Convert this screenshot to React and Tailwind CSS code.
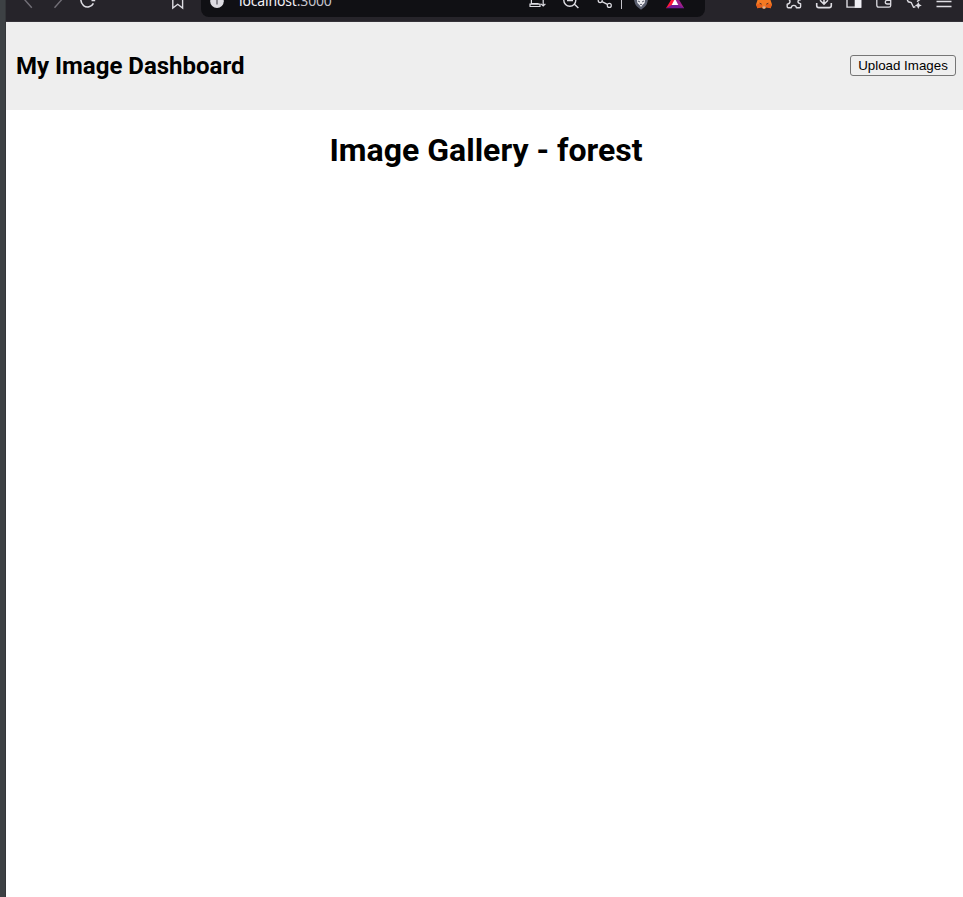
function Glyph({ x, w, className = "", children }) {
  return (
    <svg
      className={`block h-[12px] shrink-0 ${className}`}
      style={{ width: w }}
      viewBox={`${x} 0 ${w} 12`}
      fill="none"
      stroke="#dedde3"
      strokeWidth="1.4"
    >
      {children}
    </svg>
  );
}

function AddressBar() {
  return (
    <div className="ml-[17px] flex h-[17px] w-[504px] items-start overflow-hidden rounded-b-lg bg-[#101014]">
      <Glyph x={210} w={14} className="ml-[9px]">
        <circle cx="217" cy="1.2" r="6.8" fill="#dedde3" stroke="none" />
        <path d="M217 0V4.5" stroke="#77757d" strokeWidth="1.6" />
      </Glyph>
      <div className="-mt-[9px] ml-[15px] w-[100px] whitespace-nowrap font-['Noto_Sans',sans-serif] text-[14px] leading-[20px] tracking-[-0.16px] text-[#f0eff5]">
        localhost<span className="text-[#c4c3cb]">:3000</span>
      </div>
      <Glyph x={529} w={18} className="ml-[190px]">
        <path d="M531.4 0V3.5H538.6M529.5 6.5H540V4.2H530V6.5M543.2 0V6M541 3.8L543.2 6L545.4 3.8" strokeWidth="1.2" />
      </Glyph>
      <Glyph x={562} w={18} className="ml-[15px]">
        <circle cx="569.8" cy="0.3" r="6" strokeWidth="1.4" />
        <path d="M567 .5H573M574.2 4L578.4 8" strokeWidth="1.4" />
      </Glyph>
      <Glyph x={597} w={16} className="ml-[17px]">
        <circle cx="600.2" cy="0.6" r="2" strokeWidth="1.2" />
        <circle cx="609.3" cy="5.4" r="2" strokeWidth="1.2" />
        <path d="M602 1.6L607.4 4.4" strokeWidth="1.2" />
      </Glyph>
      <div className="ml-[8px] h-[9px] w-px bg-[#c3c2c9]" />
      <Glyph x={633} w={16} className="ml-[11px]">
        <path d="M634 0H648L647 3.5Q646 6.5 641 9.7Q636 6.5 635 3.5Z" fill="#5a5f70" stroke="none" />
        <path d="M637 0H645L644.6 3L642.7 4.8L641 7L639.3 4.8L637.4 3Z" fill="#eeeef2" stroke="none" />
        <path d="M638 1L640 2M644 1L642 2M640 4.4H642" stroke="#5a5f70" strokeWidth="1" />
      </Glyph>
      <Glyph x={665} w={20} className="ml-[16px]">
        <path d="M671 0H675V5.3L666 8.3Z" fill="#ff1838" stroke="none" />
        <path d="M675 0H679.2L684.2 8.3L675 5.3Z" fill="#9e1f8a" stroke="none" />
        <path d="M666 8.3L671.5 5H678.5L684.2 8.3Z" fill="#741a95" stroke="none" />
        <path d="M674.3 0H675.7L678.3 5H671.7Z" fill="#fff" stroke="none" />
      </Glyph>
    </div>
  );
}

function BrowserToolbar() {
  return (
    <div className="flex h-[22px] items-start overflow-hidden border-b border-[#353239] bg-[#26242a]">
      <Glyph x={22} w={12} className="ml-[16px]">
        <path d="M24.5 -.5L31.8 7.8" stroke="#737078" />
      </Glyph>
      <Glyph x={53} w={11} className="ml-[19px]">
        <path d="M61.8 -.5L54.5 7.8" stroke="#737078" />
      </Glyph>
      <Glyph x={79} w={18} className="ml-[15px]">
        <path d="M80.8 -1Q80.8 3.2 83.6 5.6A6.5 6.5 0 0 0 93.4 3.4" strokeWidth="1.6" />
        <path d="M91.5 .6H94.5V0" strokeWidth="1.4" />
      </Glyph>
      <Glyph x={171} w={13} className="ml-[74px]">
        <path d="M172.8 -1V8L177.7 4.3L182.6 8V-1" />
      </Glyph>
      <AddressBar />
      <Glyph x={755} w={18} className="ml-[50px]">
        <path d="M757.5 0H770.5L772 4.5L770.5 8.2L766.5 7.3L765 8.8H763L761.5 7.3L757.5 8.2L756 4.5Z" fill="#f57a22" stroke="none" />
        <path d="M756 4.5L761 3.5L763 6.5L761.5 7.3L757.5 8.2ZM772 4.5L767 3.5L765 6.5L766.5 7.3L770.5 8.2Z" fill="#e8601b" stroke="none" />
        <path d="M762.5 6.5H765.5L765 8.5H763Z" fill="#c9b3a6" stroke="none" />
        <path d="M759.6 3.2L761.7 4.2M768.4 3.2L766.3 4.2" stroke="#4b3028" strokeWidth="1" />
      </Glyph>
      <Glyph x={785} w={18} className="ml-[12px]">
        <path d="M786.8 -1.2Q790 -.8 790 1.5Q790 3.6 787.2 4.2V6.8Q787.2 7.8 788.2 7.8H791.2Q791.4 5.4 793.8 5.4Q796.2 5.4 796.4 7.8H799.4Q800.6 7.8 800.6 6.6V3.8Q798 3.6 798 1.6Q798 -.2 800.8 -.2" strokeLinejoin="round" />
      </Glyph>
      <Glyph x={815} w={18} className="ml-[12px]">
        <path d="M816.7 3V5.5Q816.7 7.6 818.8 7.6H829.2Q831.3 7.6 831.3 5.5V3M824 -1V4M820 .3L824 4.2L828 .3" strokeWidth="1.6" />
      </Glyph>
      <Glyph x={845} w={18} className="ml-[12px]">
        <path d="M847 -1V7.1H860.6V-1" />
        <path d="M854.7 0H861.3V7.8H854.7Z" fill="#f0eff4" stroke="none" />
      </Glyph>
      <Glyph x={875} w={18} className="ml-[12px]">
        <path d="M876.8 -1V5.3Q876.8 7.2 878.8 7.2H889Q890.7 7.2 890.7 5.5V-.3M891 .1M891 4H887.2Q885.3 4 885.3 2.2Q885.3 .4 887.2 .4H891" strokeWidth="1.3" />
      </Glyph>
      <Glyph x={905} w={18} className="ml-[12px]">
        <path d="M907 -.7L908.3 1.8L911.2 2.5L913.5 7.2L915.4 6.8M917 1.6L920.5 -1" strokeWidth="1.4" />
        <path d="M918.3 1.9L919.4 4.3L921.8 5.4L919.4 6.5L918.3 8.9L917.2 6.5L914.8 5.4L917.2 4.3Z" fill="#dedde3" stroke="none" />
      </Glyph>
      <Glyph x={935} w={18} className="ml-[12px]">
        <path d="M936.5 1.5H951.5M936.5 6.5H951.5" strokeWidth="1.3" />
      </Glyph>
    </div>
  );
}

export default function App() {
  return (
    <div className="flex h-[897px] w-[963px] overflow-hidden bg-white font-[Roboto,sans-serif] text-black">
      <div className="w-[6px] shrink-0 border-r border-[#343639] bg-[#3d4144]" />
      <div className="min-w-0 flex-1">
        <BrowserToolbar />
        <header className="flex h-[88px] items-center justify-between bg-[#eeeeee] pl-[10px] pr-[7px]">
          <h2 className="text-[24px] font-bold leading-[28px]">My Image Dashboard</h2>
          <button className="mb-[2px] h-[21px] w-[106px] whitespace-nowrap rounded-[3px] border border-[#767676] bg-[#efefef] font-['Liberation_Sans',Arial,sans-serif] text-[13.333px] leading-[15px]">
            Upload Images
          </button>
        </header>
        <main>
          <h1 className="mt-[21px] pl-[3px] text-center text-[32px] font-bold leading-[38px]">Image Gallery - forest</h1>
        </main>
      </div>
    </div>
  );
}
